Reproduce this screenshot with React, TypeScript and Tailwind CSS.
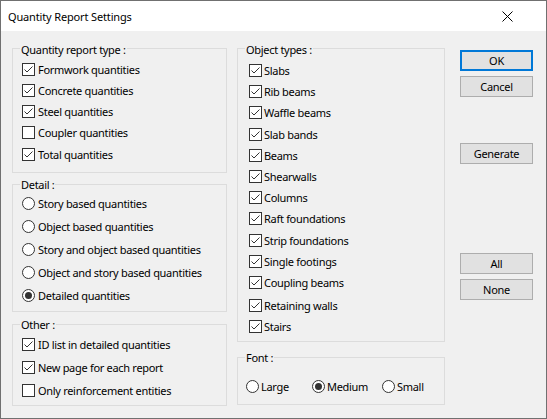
import React from 'react';

type Item = { label: string; checked: boolean; extra?: string };

const reportTypes: Item[] = [
  { label: 'Formwork quantities', checked: true },
  { label: 'Concrete quantities', checked: true },
  { label: 'Steel quantities', checked: true },
  { label: 'Coupler quantities', checked: false },
  { label: 'Total quantities', checked: true },
];

const details = [
  { label: 'Story based quantities', checked: false },
  { label: 'Object based quantities', checked: false },
  { label: 'Story and object based quantities', checked: false },
  { label: 'Object and story based quantities', checked: false },
  { label: 'Detailed quantities', checked: true },
];

const others: Item[] = [
  { label: 'ID list in detailed quantities', checked: true },
  { label: 'New page for each report', checked: true },
  { label: 'Only reinforcement entities', checked: false },
];

const objectTypes: Item[] = [
  { label: 'Slabs', checked: true },
  { label: 'Rib beams', checked: true },
  { label: 'Waffle beams', checked: true },
  { label: 'Slab bands', checked: true },
  { label: 'Beams', checked: true },
  { label: 'Shearwalls', checked: true },
  { label: 'Columns', checked: true },
  { label: 'Raft foundations', checked: true },
  { label: 'Strip foundations', checked: true },
  { label: 'Single footings', checked: true },
  { label: 'Coupling beams', checked: true },
  { label: 'Retaining walls', checked: true, extra: 'mt-[2px]' },
  { label: 'Stairs', checked: true },
];

function CheckBox({ checked }: { checked: boolean }) {
  return (
    <span className="w-[13px] h-[13px] shrink-0 border border-[#333333] bg-white flex items-center justify-center">
      {checked && (
        <svg width="11" height="11" viewBox="0 0 11 11" className="block">
          <path d="M1.5 5.5 L4 8 L9.5 2.5" fill="none" stroke="#333333" strokeWidth="1" />
        </svg>
      )}
    </span>
  );
}

function Radio({ checked }: { checked: boolean }) {
  return (
    <span className="w-[13px] h-[13px] shrink-0 rounded-full border border-[#333333] bg-white flex items-center justify-center">
      {checked && <span className="w-[7px] h-[7px] rounded-full bg-[#333333]" />}
    </span>
  );
}

function Group({ title, legendOffset = '-mt-[7px]', className, children }: { title: string; legendOffset?: string; className: string; children: React.ReactNode }) {
  return (
    <div className={`border border-[#dcdcdc] ${className}`}>
      <div className={`${legendOffset} ml-[7px] px-[1px] w-fit bg-[#f0f0f0] leading-[16px] whitespace-nowrap`}>{title}</div>
      {children}
    </div>
  );
}

function Button({ label, focused, className }: { label: string; focused?: boolean; className: string }) {
  return (
    <div
      className={`w-[73px] h-[21px] bg-[#e1e1e1] flex items-center justify-center leading-none ${
        focused ? 'border-2 border-[#0078d7]' : 'border border-[#adadad]'
      } ${className}`}
    >
      {label}
    </div>
  );
}

export default function App() {
  return (
    <div className="w-[547px] h-[419px] border border-[#707070] bg-[#f0f0f0] flex flex-col text-[11px] tracking-[-0.3px] text-black font-['Noto_Sans',sans-serif] overflow-hidden">
      <div className="h-[30px] shrink-0 bg-white flex items-center justify-between pl-[7px] pr-[33px]">
        <span className="leading-none tracking-[-0.15px]">Quantity Report Settings</span>
        <svg width="11" height="11" viewBox="0 0 11 11" className="block">
          <path d="M0.5 0.5 L10.5 10.5 M10.5 0.5 L0.5 10.5" stroke="#000" strokeWidth="1" />
        </svg>
      </div>

      <div className="flex-1 flex pl-[11px]">
        {/* left column */}
        <div className="w-[215px] flex flex-col">
          <Group title="Quantity report type :" className="mt-[17px] pb-[7px]">
            <div className="mt-[0.4px]">
              {reportTypes.map((it) => (
                <div key={it.label} className="h-[21.25px] flex items-center gap-[3px] pl-[9px] whitespace-nowrap">
                  <CheckBox checked={it.checked} />
                  <span className="leading-none">{it.label}</span>
                </div>
              ))}
            </div>
          </Group>

          <Group title="Detail :" legendOffset="-mt-[8px]" className="mt-[11px] pb-[4px]">
            <div className="-mt-[1px]">
              {details.map((it) => (
                <div key={it.label} className="h-[23px] flex items-center gap-[3px] pl-[9px] whitespace-nowrap">
                  <Radio checked={it.checked} />
                  <span className="leading-none">{it.label}</span>
                </div>
              ))}
            </div>
          </Group>

          <Group title="Other :" legendOffset="-mt-[8px]" className="mt-[12px] pb-[3px]">
            <div className="mt-[0px]">
              {others.map((it) => (
                <div key={it.label} className="h-[23px] flex items-center gap-[3px] pl-[9px] whitespace-nowrap">
                  <CheckBox checked={it.checked} />
                  <span className="leading-none">{it.label}</span>
                </div>
              ))}
            </div>
          </Group>
        </div>

        {/* middle column */}
        <div className="w-[208px] ml-[10px] flex flex-col">
          <Group title="Object types :" className="mt-[17px] pb-[4px]">
            <div className="mt-[2px]">
              {objectTypes.map((it) => (
                <div key={it.label} className={`h-[21.2px] flex items-center gap-[2px] pl-[11px] whitespace-nowrap ${it.extra ?? ''}`}>
                  <CheckBox checked={it.checked} />
                  <span className="leading-none">{it.label}</span>
                </div>
              ))}
            </div>
          </Group>

          <Group title="Font :" legendOffset="-mt-[8px]" className="mt-[15px] pb-[7px]">
            <div className="mt-[10px] h-[21px] flex items-center pl-[8px]">
              {[
                { label: 'Large', checked: false, w: 'w-[66px]' },
                { label: 'Medium', checked: true, w: 'w-[70px]' },
                { label: 'Small', checked: false, w: 'w-[60px]' },
              ].map((r) => (
                <div key={r.label} className={`${r.w} flex items-center gap-[2px]`}>
                  <Radio checked={r.checked} />
                  <span className="leading-none">{r.label}</span>
                </div>
              ))}
            </div>
          </Group>
        </div>

        {/* buttons */}
        <div className="ml-[15px] flex flex-col">
          <Button label="OK" focused className="mt-[19px]" />
          <Button label="Cancel" className="mt-[5px]" />
          <Button label="Generate" className="mt-[46px]" />
          <Button label="All" className="mt-[89px]" />
          <Button label="None" className="mt-[5px]" />
        </div>
      </div>
    </div>
  );
}
